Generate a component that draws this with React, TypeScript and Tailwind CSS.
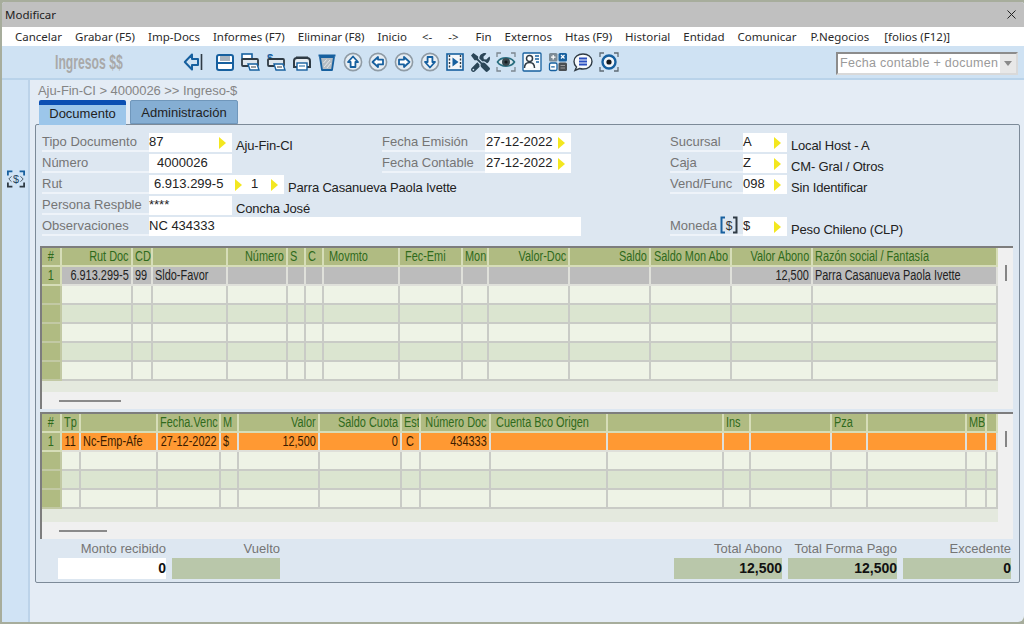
import { FaTools } from "react-icons/fa";
import { X } from "lucide-react";

/* ================= DATA ================= */

const menu = [
  { t: "Cancelar" }, { t: "Grabar (F5)" }, { t: "Imp-Docs" }, { t: "Informes (F7)" }, { t: "Eliminar (F8)" }, { t: "Inicio" },
  { t: "<-", m: "ml-[2px]" }, { t: "->", m: "ml-[3px]" }, { t: "Fin", m: "ml-[4px]" },
  { t: "Externos" }, { t: "Htas (F9)" }, { t: "Historial" }, { t: "Entidad" }, { t: "Comunicar" },
  { t: "P.Negocios", m: "ml-[1px]" }, { t: "[folios (F12)]", m: "ml-[2px]" },
];

type Align = "l" | "r" | "c" | "p";
type Col = { t?: string; a?: Align };

const cols1: Col[] = [
  { t: "#", a: "c" }, { t: "Rut Doc", a: "r" }, { t: "CD" }, {}, { t: "Número", a: "r" }, { t: "S" }, { t: "C" },
  { t: "Movmto", a: "p" }, { t: "Fec-Emi", a: "p" }, { t: "Mon" }, { t: "Valor-Doc", a: "r" }, { t: "Saldo", a: "r" },
  { t: "Saldo Mon Abo", a: "r" }, { t: "Valor Abono", a: "r" }, { t: "Razón social / Fantasía" },
];
const row1: Col[] = [
  { t: "1", a: "c" }, { t: "6.913.299-5", a: "r" }, { t: "99" }, { t: "Sldo-Favor" }, {}, {}, {}, {}, {}, {}, {}, {}, {},
  { t: "12,500", a: "r" }, { t: "Parra Casanueva Paola Ivette" },
];

const cols2: Col[] = [
  { t: "#", a: "c" }, { t: "Tp" }, {}, { t: "Fecha.Venc" }, { t: "M" }, { t: "Valor", a: "r" }, { t: "Saldo Cuota", a: "r" },
  { t: "Est" }, { t: "Número Doc", a: "r" }, { t: "Cuenta Bco Origen", a: "p" }, {}, { t: "Ins" }, {}, { t: "Pza" }, {}, { t: "MB" }, {},
];
const row2: Col[] = [
  { t: "1", a: "c" }, { t: "11", a: "c" }, { t: "Nc-Emp-Afe" }, { t: "27-12-2022", a: "r" }, { t: "$" }, { t: "12,500", a: "r" },
  { t: "0", a: "r" }, { t: "C", a: "c" }, { t: "434333", a: "r" }, {}, {}, {}, {}, {}, {}, {}, {},
];

const tpl1 = "grid grid-cols-[20px_71px_20px_75px_60px_18px_18px_76px_63px_26px_81px_81px_81px_81px_185px]";
const tpl2 = "grid grid-cols-[20px_19px_77px_63px_18px_81px_82px_19px_70px_117px_116px_27px_81px_36px_99px_20px_11px]";

/* ================= ICONS ================= */

const BLUE = "#17609f";
const DARK = "#2f3b45";

function Back() {
  return (
    <svg width="20" height="20" viewBox="0 0 20 20" fill="none">
      <path d="M9 2.5 1.8 10 9 17.5V13h6V7H9z" stroke={BLUE} strokeWidth="2" strokeLinejoin="round" />
      <path d="M18.5 2v16" stroke={DARK} strokeWidth="1.6" />
    </svg>
  );
}

function Save() {
  return (
    <svg width="20" height="20" viewBox="0 0 20 20" fill="none">
      <rect x="2" y="3" width="16" height="15" rx="2" fill="#fff" stroke={BLUE} strokeWidth="2" />
      <rect x="5" y="4" width="10" height="5" fill="#a9b4bf" />
      <path d="M2 11h16" stroke={BLUE} strokeWidth="2" />
    </svg>
  );
}

function Printer({ money }: { money?: boolean }) {
  return (
    <svg width="20" height="20" viewBox="0 0 20 20" fill="none">
      {money ? (
        <text x="1" y="10" fontSize="11" fontWeight="700" fontFamily="Liberation Sans" fill={BLUE}>$</text>
      ) : (
        <rect x="2" y="2" width="10" height="5" fill="#fff" stroke={BLUE} strokeWidth="1.6" />
      )}
      <rect x="2" y="7" width="16" height="7" rx="1" fill="#dfe7ee" stroke={DARK} strokeWidth="1.8" />
      <path d="M8 12h9l2 6H10z" fill="#fff" stroke={BLUE} strokeWidth="1.4" />
      <path d="M11 15h5" stroke={DARK} strokeWidth="1" />
    </svg>
  );
}

function BigPrinter() {
  return (
    <svg width="20" height="20" viewBox="0 0 20 20" fill="none">
      <path d="M2 9a3 3 0 0 1 3-3h10a3 3 0 0 1 3 3v6H2z" fill="#e9eef2" stroke={DARK} strokeWidth="2" />
      <path d="M4 5.500h12" stroke={DARK} strokeWidth="2" />
      <rect x="5" y="11" width="10" height="7" fill="#fff" stroke={BLUE} strokeWidth="1.4" />
      <path d="M7 14h6" stroke={BLUE} strokeWidth="1" />
    </svg>
  );
}

function Trash() {
  return (
    <svg width="20" height="20" viewBox="0 0 20 20" fill="none">
      <path d="M3 5h14l-2 13H5z" fill="#b4bcc3" stroke={BLUE} strokeWidth="1.8" strokeLinejoin="round" />
      <path d="M1.500 3.500h17" stroke={BLUE} strokeWidth="2" />
      <path d="M7 15l6-7M6.500 11l3-3.500M10 16l4-5" stroke="#e3e7ea" strokeWidth="1" />
    </svg>
  );
}

function CircleArrow({ rot }: { rot: string }) {
  return (
    <svg width="20" height="20" viewBox="0 0 20 20" fill="none" className={rot}>
      <circle cx="10" cy="10" r="8.600" fill="#e6edf3" stroke="#8f9ba5" strokeWidth="1.6" />
      <path d="M10 4.500 15 10h-2.600v5H7.600v-5H5z" fill="#fff" stroke={BLUE} strokeWidth="1.8" strokeLinejoin="round" />
    </svg>
  );
}

function Film() {
  return (
    <svg width="20" height="20" viewBox="0 0 20 20" fill="none">
      <rect x="2" y="2" width="16" height="16" fill="#f4f7fa" stroke={BLUE} strokeWidth="1.6" />
      <path d="M4.500 3v14M15.500 3v14" stroke={DARK} strokeWidth="1.4" strokeDasharray="2 1.500" />
      <path d="M7.500 5.500 13.500 10l-6 4.500z" fill={BLUE} />
    </svg>
  );
}

function Corners({ color }: { color: string }) {
  return <path d="M1 5V1h4M15 1h4v4M19 15v4h-4M5 19H1v-4" stroke={color} strokeWidth="1.3" fill="none" />;
}

function Eye() {
  return (
    <svg width="20" height="20" viewBox="0 0 20 20" fill="none">
      <Corners color="#7c8790" />
      <path d="M1.500 10C5 4.500 15 4.500 18.500 10 15 15.500 5 15.500 1.500 10z" fill="#dbe6ec" stroke="#2a6f80" strokeWidth="1.6" />
      <circle cx="10" cy="10" r="4" fill="#38484f" />
      <circle cx="10" cy="10" r="1.600" fill="#141a1d" />
    </svg>
  );
}

function Person() {
  return (
    <svg width="20" height="20" viewBox="0 0 20 20" fill="none">
      <rect x="1" y="1" width="18" height="18" rx="1" fill="#f7fafc" stroke={BLUE} strokeWidth="1.3" />
      <circle cx="7.500" cy="6.500" r="3" fill="#fff" stroke={DARK} strokeWidth="1.500" />
      <path d="M2.500 16c0-4 2-5.500 5-5.500s5 1.500 5 5.500" fill="#fff" stroke={DARK} strokeWidth="1.500" />
      <path d="M13 4h4M13 7h4M14 10h3" stroke={BLUE} strokeWidth="1.400" />
    </svg>
  );
}

function Calc() {
  return (
    <svg width="20" height="20" viewBox="0 0 20 20" fill="none">
      <rect x="1" y="1" width="8.500" height="8.500" rx="1.500" fill="#7d8b96" />
      <rect x="10.500" y="1" width="8.500" height="8.500" rx="1.500" fill={BLUE} />
      <rect x="1.500" y="11" width="7.500" height="7.500" rx="1.500" fill="#fff" stroke={BLUE} strokeWidth="1.300" />
      <rect x="10.500" y="10.500" width="8.500" height="8.500" rx="1.500" fill="#4a4f53" />
      <path d="M3 5.200h4.500M5.200 3v4.500" stroke="#fff" strokeWidth="1.200" />
      <path d="M13 3l3.500 3.500M16.500 3 13 6.500" stroke="#fff" strokeWidth="1.200" />
      <path d="M3.200 14.800h3.500" stroke={BLUE} strokeWidth="1.200" />
      <path d="M12.500 13.500h4.500M12.500 16h4.500" stroke="#999" strokeWidth="1.200" />
    </svg>
  );
}

function Chat() {
  return (
    <svg width="20" height="20" viewBox="0 0 20 20" fill="none">
      <path d="M10 2c5 0 9 3 9 7.500S15 17 10 17c-1.500 0-2.500-.2-3.500-.5L2 18.500l1.500-3.500C2 13.700 1 11.700 1 9.500 1 5 5 2 10 2z" fill="#f7fafc" stroke={DARK} strokeWidth="1.400" />
      <path d="M6 6.500h8M6 9.500h8M6 12.500h8" stroke="#2a4fc0" strokeWidth="1.800" />
    </svg>
  );
}

function Target() {
  return (
    <svg width="20" height="20" viewBox="0 0 20 20" fill="none">
      <Corners color="#5f6b75" />
      <circle cx="10" cy="10" r="6.500" fill="#f2f6fa" stroke={BLUE} strokeWidth="2.400" />
      <circle cx="10" cy="10" r="2.600" fill="#15191c" />
    </svg>
  );
}

function MoneyScan() {
  return (
    <svg width="18" height="18" viewBox="0 0 20 20" fill="none">
      <path d="M1 6V1.500h5M14 1.500h5V6" stroke={BLUE} strokeWidth="2" />
      <path d="M1 14v4.500h5M14 18.500h5V14" stroke={DARK} strokeWidth="2" />
      <path d="M5 7 2 10l3 3M15 7l3 3-3 3" stroke="#4b5a66" strokeWidth="1.100" />
      <text x="10" y="14" textAnchor="middle" fontSize="12" fontFamily="Liberation Sans" fill="#25455f">$</text>
    </svg>
  );
}

function MoneyBox() {
  return (
    <svg width="18" height="18" viewBox="0 0 18 18" fill="none">
      <path d="M5 1.500H1.500v15H5" stroke={BLUE} strokeWidth="2" />
      <path d="M13 1.500h3.500v15H13" stroke={DARK} strokeWidth="2" />
      <text x="9" y="13.500" textAnchor="middle" fontSize="12" fontFamily="Liberation Sans" fill="#333">$</text>
    </svg>
  );
}

/* ================= SMALL PARTS ================= */

function Arrow() {
  return <div className="w-0 h-0 border-y-[6px] border-l-[7px] border-y-transparent border-l-[#f3e71f]" />;
}

function Label({ text, w }: { text: string; w: string }) {
  return (
    <div className={`${w} h-[19px] shrink-0 border-b-2 border-[#eef3f9] text-[#757575] leading-[17px] whitespace-nowrap`}>
      {text}
    </div>
  );
}

function Input({ w, text, arrow, pl = "pl-0" }: { w: string; text: string; arrow?: boolean; pl?: string }) {
  return (
    <div className={`${w} ${pl} h-[19px] shrink-0 bg-white flex items-center justify-between pr-[6px] text-[#222] leading-[17px] whitespace-nowrap`}>
      <span className="-mt-[2px]">{text}</span>
      {arrow && <Arrow />}
    </div>
  );
}

function Desc({ text }: { text: string }) {
  return <div className="ml-[4px] h-[19px] pt-[5px] text-[#222] leading-[15px] tracking-[-0.17px] whitespace-nowrap">{text}</div>;
}

// el texto de las grillas va angostado como en el original
function Cell({ c, className }: { c: Col; className: string }) {
  const a = c.a ?? "l";
  const box = a === "r" ? "justify-end pr-[2px]" : a === "c" ? "justify-center" : a === "p" ? "pl-[5px]" : "pl-[2px]";
  const origin = a === "r" ? "origin-right" : a === "c" ? "origin-center" : "origin-left";
  return (
    <div className={`flex border-r-2 border-b-2 overflow-hidden whitespace-nowrap leading-[16px] ${box} ${className}`}>
      {c.t && <span className={`inline-block shrink-0 scale-x-[0.78] ${origin}`}>{c.t}</span>}
    </div>
  );
}

function Grid({ tpl, cols, row, rowBg, rowText, rows, stripH, thumbW }: {
  tpl: string; cols: Col[]; row: Col[]; rowBg: string; rowText: string; rows: number; stripH: string; thumbW: string;
}) {
  const blank = Array.from({ length: rows }, (_, i) => i);
  return (
    <div className="relative w-[973px] bg-[#f0f0f0] border-t-2 border-l-2 border-[#7d7d7d] text-[14px]">
      <div className="w-[956px]">
        <div className={`${tpl} h-[19px] bg-[#b0bb82] text-[#2f6a1c]`}>
          {cols.map((c, i) => (
            <Cell key={i} c={c} className="border-[#d6ddb8]" />
          ))}
        </div>
        <div className={`${tpl} h-[19px] ${rowBg} ${rowText}`}>
          {row.map((c, i) => (
            <Cell key={i} c={c} className={i === 0 ? "border-[#d6ddb8] bg-[#b0bb82] text-[#2f6a1c]" : "border-[#dfe0da]"} />
          ))}
        </div>
        {blank.map((r) => (
          <div key={r} className={`${tpl} h-[19px] ${r % 2 === 0 ? "bg-[#eef3e6]" : "bg-[#dbe5d0]"}`}>
            {cols.map((_, i) => (
              <div key={i} className={`border-r-2 border-b-2 ${i === 0 ? "bg-[#b0bb82] border-[#c2c9a4]" : "border-[#c9cbc6]"}`} />
            ))}
          </div>
        ))}
        <div className={`${stripH} bg-[#e4e9de]`} />
      </div>
      <div className="h-[17px]" />
      <div className={`absolute left-[17px] bottom-[7px] h-[2px] ${thumbW} bg-[#8a8a8a]`} />
      <div className="absolute left-[963px] top-[17px] w-[2px] h-[16px] bg-[#858585]" />
    </div>
  );
}

/* ================= APP ================= */

export default function App() {
  return (
    <div className="w-[1024px] h-[624px] bg-[#a7ad9c] pt-[2px] pl-[2px] overflow-hidden font-['Liberation_Sans',sans-serif] text-[13px]">
      <div className="w-[1022px] h-[620px] rounded-t-[3px] rounded-br-[6px] overflow-hidden flex flex-col bg-[#e4ecf5]">
        {/* TITLE */}
        <div className="h-[25px] shrink-0 bg-[#c0c0c0] flex items-center justify-between pl-[3px] pr-[5px]">
          <span className="font-['Noto_Sans',sans-serif] text-[11.5px] text-[#222]">Modificar</span>
          <X className="w-[15px] h-[15px] text-[#222]" strokeWidth={1.6} />
        </div>

        {/* MENU */}
        <div className="h-[19px] shrink-0 bg-white flex items-center gap-[13px] pl-[13px] font-['Noto_Sans',sans-serif] text-[11.5px] text-[#2a2a2a] whitespace-nowrap">
          {menu.map((m) => (
            <span key={m.t} className={m.m}>{m.t}</span>
          ))}
        </div>

        {/* TOOLBAR */}
        <div className="h-[34px] shrink-0 bg-[#cfe2f3] border-b-2 border-[#b9d3ea] flex items-center">
          <div className="w-[178px] pl-[53px] shrink-0 text-[21px] font-bold text-[#a9a9a9] whitespace-nowrap">
            <span className="inline-block scale-x-[0.58] origin-left">Ingresos $$</span>
          </div>
          <div className="w-[26px] flex justify-center"><Back /></div>
          <div className="w-[6px]" />
          {[
            <Save />, <Printer />, <Printer money />, <BigPrinter />, <Trash />,
            <CircleArrow rot="" />, <CircleArrow rot="-rotate-90" />, <CircleArrow rot="rotate-90" />, <CircleArrow rot="rotate-180" />,
            <Film />, <FaTools size={19} color="#2b4658" />, <Eye />, <Person />, <Calc />, <Chat />, <Target />,
          ].map((icon, i) => (
            <div key={i} className="w-[25.6px] flex justify-center">{icon}</div>
          ))}
          <div className="ml-auto mr-[6px] mt-[2px] w-[182px] h-[23px] bg-white border-2 border-[#8c8c8c] border-r-[#d9d9d9] border-b-[#d9d9d9] flex items-center">
            <span className="flex-1 pl-[2px] text-[12.5px] tracking-[0.3px] text-[#9a9a9a] whitespace-nowrap">Fecha contable + documen</span>
            <div className="w-[16px] h-full shrink-0 bg-[#e8e8e8] flex items-center justify-center">
              <div className="w-0 h-0 border-x-[4px] border-t-[5px] border-x-transparent border-t-[#8a8a8a]" />
            </div>
          </div>
        </div>

        {/* BODY */}
        <div className="flex-1 flex min-h-0">
          <div className="w-[28px] shrink-0 bg-[#d0e3f5] border-r-2 border-[#bcd3e9] pt-[90px] pl-[5px]">
            <MoneyScan />
          </div>
          <div className="flex-1 pl-[5px] pr-[2px] flex flex-col min-w-0">
            <div className="h-[20px] pl-[3px] pt-[3px] text-[#858585] leading-[16px] tracking-[-0.06px]">Aju-Fin-CI &gt; 4000026 &gt;&gt; Ingreso-$</div>
            <div className="h-[25px] pl-[4px] flex gap-[4px] -mb-px relative z-10">
              <div className="w-[87px] h-full rounded-t-[2px] bg-[#9cc6ea] border-t-[5px] border-[#0b4fb3] text-center leading-[17px] text-[#222]">Documento</div>
              <div className="w-[108px] h-[24px] rounded-t-[2px] bg-[#85aed3] border border-[#7097bb] text-center leading-[24px] text-[#222]">Administración</div>
            </div>

            {/* PANEL */}
            <div className="w-[985px] h-[459px] bg-[#dde7f1] border border-[#7c8a98] rounded-[2px] flex flex-col">
              {/* FORM */}
              <div className="h-[121px] pt-[8px] pl-[6px] flex shrink-0">
                <div className="w-[628px] shrink-0 flex flex-col gap-[2px]">
                  <div className="flex">
                    <div className="w-[340px] flex flex-col gap-[2px]">
                      <div className="flex"><Label w="w-[107px]" text="Tipo Documento" /><Input w="w-[83px]" text="87" arrow /><Desc text="Aju-Fin-CI" /></div>
                      <div className="flex"><Label w="w-[107px]" text="Número" /><Input w="w-[83px]" pl="pl-[8px]" text="4000026" /></div>
                      <div className="flex">
                        <Label w="w-[107px]" text="Rut" />
                        <Input w="w-[99px]" pl="pl-[5px]" text="6.913.299-5" arrow />
                        <div className="w-[2px]" />
                        <Input w="w-[36px]" pl="pl-[3px]" text="1" arrow />
                        <Desc text="Parra Casanueva Paola Ivette" />
                      </div>
                      <div className="flex"><Label w="w-[107px]" text="Persona Respble" /><Input w="w-[83px]" text="****" /><Desc text="Concha José" /></div>
                    </div>
                    <div className="flex flex-col gap-[2px]">
                      <div className="flex"><Label w="w-[103px]" text="Fecha Emisión" /><Input w="w-[86px]" pl="pl-[1px]" text="27-12-2022" arrow /></div>
                      <div className="flex"><Label w="w-[103px]" text="Fecha Contable" /><Input w="w-[86px]" pl="pl-[1px]" text="27-12-2022" arrow /></div>
                    </div>
                  </div>
                  <div className="flex"><Label w="w-[107px]" text="Observaciones" /><Input w="w-[432px]" text="NC 434333" /></div>
                </div>
                <div className="flex flex-col gap-[2px]">
                  <div className="flex"><Label w="w-[73px]" text="Sucursal" /><Input w="w-[44px]" text="A" arrow /><Desc text="Local Host - A" /></div>
                  <div className="flex"><Label w="w-[73px]" text="Caja" /><Input w="w-[44px]" text="Z" arrow /><Desc text="CM- Gral / Otros" /></div>
                  <div className="flex"><Label w="w-[73px]" text="Vend/Func" /><Input w="w-[44px]" text="098" arrow /><Desc text="Sin Identificar" /></div>
                  <div className="h-[19px]" />
                  <div className="flex">
                    <div className="w-[73px] h-[19px] shrink-0 border-b-2 border-[#eef3f9] flex text-[#757575] leading-[17px]">
                      <span>Moneda</span>
                      <span className="ml-[3px] -mt-px"><MoneyBox /></span>
                    </div>
                    <Input w="w-[44px]" text="$" arrow />
                    <Desc text="Peso Chileno (CLP)" />
                  </div>
                </div>
              </div>

              {/* GRIDS */}
              <div className="pl-[4px] flex flex-col gap-[3px]">
                <Grid tpl={tpl1} cols={cols1} row={row1} rowBg="bg-[#bcbcbc]" rowText="text-[#222]" rows={5} stripH="h-[11px]" thumbW="w-[62px]" />
                <Grid tpl={tpl2} cols={cols2} row={row2} rowBg="bg-[#ff9933]" rowText="text-[#3a1c00]" rows={3} stripH="h-[13px]" thumbW="w-[48px]" />
              </div>

              {/* TOTALS */}
              <div className="flex justify-between pl-[22px] pr-[8px] pt-[2px] text-[#757575]">
                <div className="flex gap-[6px]">
                  <div className="w-[108px]"><div className="h-[17px] text-right leading-[16px]">Monto recibido</div><div className="h-[21px] bg-white text-right text-[14px] font-bold leading-[20px] text-[#111]">0</div></div>
                  <div className="w-[108px]"><div className="h-[17px] text-right leading-[16px]">Vuelto</div><div className="h-[21px] bg-[#b9c7aa]" /></div>
                </div>
                <div className="flex gap-[6px]">
                  <div className="w-[108px]"><div className="h-[17px] text-right leading-[16px]">Total Abono</div><div className="h-[21px] bg-[#b9c7aa] text-right text-[14px] font-bold leading-[20px] text-[#111]">12,500</div></div>
                  <div className="w-[109px]"><div className="h-[17px] text-right leading-[16px]">Total Forma Pago</div><div className="h-[21px] bg-[#b9c7aa] text-right text-[14px] font-bold leading-[20px] text-[#111]">12,500</div></div>
                  <div className="w-[108px]"><div className="h-[17px] text-right leading-[16px]">Excedente</div><div className="h-[21px] bg-[#b9c7aa] text-right text-[14px] font-bold leading-[20px] text-[#111]">0</div></div>
                </div>
              </div>
            </div>
          </div>
        </div>
      </div>
    </div>
  );
}
